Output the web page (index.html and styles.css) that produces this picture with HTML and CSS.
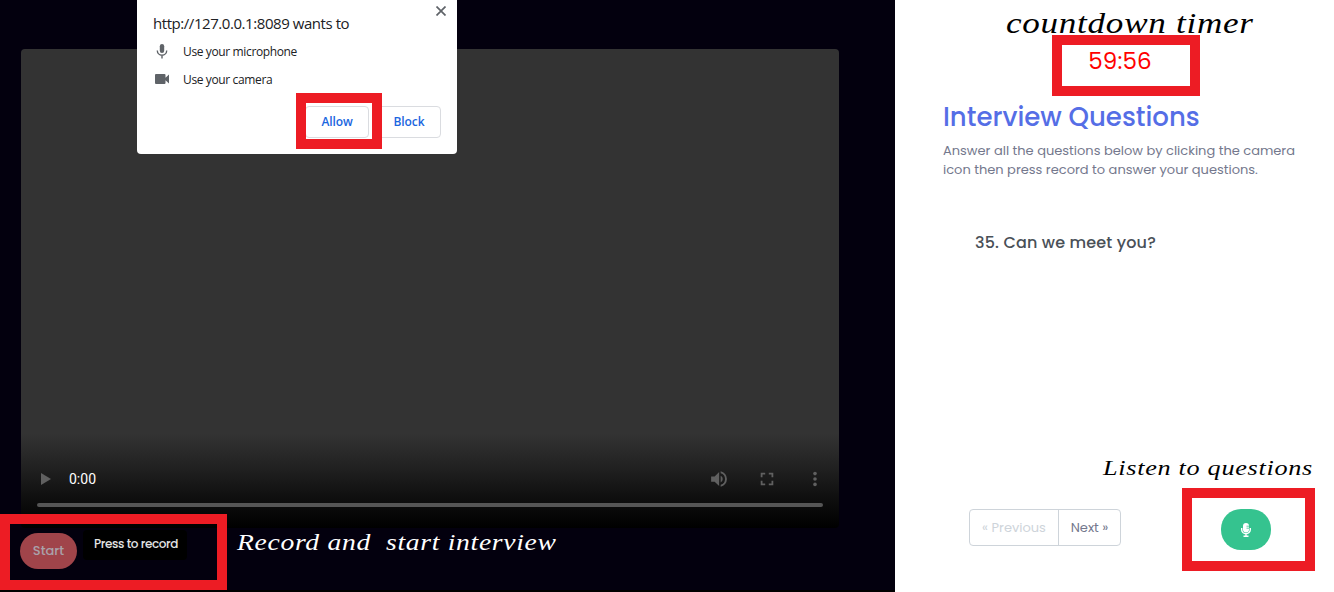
FILE: index.html
```html
<!DOCTYPE html>
<html lang="en">
<head>
<meta charset="utf-8">
<title>Interview</title>
<link rel="stylesheet" href="styles.css">
</head>
<body>
<main class="page">
  <section class="stage">
    <div class="video">
      <div class="controls">
        <svg class="play" viewBox="0 0 10 12"><path d="M0 0L10 6L0 12Z"/></svg>
        <span class="time">0:00</span>
        <svg class="ctl" viewBox="0 0 24 24"><path d="M1.500 8.500v7h4.700l6 5.700V2.800l-6 5.700zM17 12a5 5 0 0 0-2.800-4.500v9A5 5 0 0 0 17 12zM14.200 1.800v2.500a8 8 0 0 1 0 15.400v2.500a10.400 10.400 0 0 0 0-20.400z"/></svg>
        <svg class="ctl" viewBox="0 0 24 24"><path d="M7 14H5v5h5v-2H7zM5 10h2V7h3V5H5zm12 7h-3v2h5v-5h-2zM14 5v2h3v3h2V5z" transform="translate(-2.400 -2.400) scale(1.200)"/></svg>
        <svg class="ctl" viewBox="0 0 24 24"><circle cx="12" cy="4.800" r="2.400"/><circle cx="12" cy="12" r="2.400"/><circle cx="12" cy="19.200" r="2.400"/></svg>
      </div>
      <div class="track"></div>
    </div>
    <div class="record">
      <button class="start">Start</button>
      <span class="tip">Press to record</span>
    </div>
  </section>
  <aside class="panel">
    <div class="timer">59:56</div>
    <h1 class="title">Interview Questions</h1>
    <p class="intro">Answer all the questions below by clicking the camera<br>icon then press record to answer your questions.</p>
    <p class="question">35. Can we meet you?</p>
    <div class="footer">
      <nav class="pager"><span class="prev">« Previous</span><span class="next">Next »</span></nav>
      <button class="listen" aria-label="Listen">
        <svg class="mic" viewBox="0 0 10 14"><rect x="2" y="0" width="6" height="9.500" rx="3"/><path d="M.7 5v1.500a4.300 4.300 0 0 0 8.600 0V5M5 11v2M2.500 13.200h5" fill="none" stroke="#fff" stroke-width="1.400"/><path d="M5.500 3.200h2.500M5.500 5.200h2.500" stroke="#35c38f" stroke-width=".8"/></svg>
      </button>
    </div>
  </aside>
</main>

<div class="prompt">
  <svg class="close" viewBox="0 0 10 10"><path d="M.5.5l9 9M9.500.5l-9 9"/></svg>
  <div class="origin">http://127.0.0.1:8089 wants to</div>
  <div class="perm">
    <svg viewBox="0 0 12 15"><rect x="3.800" y="0" width="4.400" height="9" rx="2.200"/><path d="M1.300 6.500a4.700 4.700 0 0 0 9.400 0M6 11v3.500" fill="none" stroke="#5f6368" stroke-width="1.400"/></svg>
    <span>Use your microphone</span>
  </div>
  <div class="perm">
    <svg class="cam" viewBox="0 0 14 10"><path d="M1 0h8.500a1 1 0 0 1 1 1v2.800L14 .6v8.800l-3.500-3.200V9a1 1 0 0 1-1 1H1a1 1 0 0 1-1-1V1a1 1 0 0 1 1-1z"/></svg>
    <span>Use your camera</span>
  </div>
  <div class="actions"><button class="choice">Allow</button><button class="choice">Block</button></div>
</div>

<div class="mark mark-allow"></div>
<div class="mark mark-start"></div>
<div class="mark mark-timer"></div>
<div class="mark mark-listen"></div>
<div class="note note-timer">countdown timer</div>
<div class="note note-record">Record and&nbsp; start interview</div>
<div class="note note-listen">Listen to questions</div>
</body>
</html>
```
FILE: styles.css
```css
* { box-sizing: border-box; }
body { margin: 0; background: #fff; font-family: Poppins, Inter, sans-serif; overflow: hidden; }
button { font-family: inherit; border: 0; padding: 0; }
p, h1 { margin: 0; }
span { white-space: nowrap; }
.page { display: flex; height: 592px; }

.stage { width: 895px; padding: 49px 56px 0 21px; background: #03000e; border-bottom: 2px solid #000; }
.video { height: 479px; border-radius: 4px; background: linear-gradient(#333 0, #333 385px, #232323 415px, #111 445px, #000 479px); padding: 420px 16px 0; }
.controls { display: flex; align-items: center; height: 20px; padding: 0 0 0 4px; fill: #606060; }
.play { width: 10px; height: 12px; }
.time { margin: 0 auto 0 18px; font: 14px/20px Roboto, sans-serif; color: #fff; }
.ctl { width: 18px; height: 18px; margin-left: 30px; }
.ctl:last-child { margin-right: -1px; }
.track { height: 4px; margin-top: 14px; border-radius: 2px; background: #555; }
.record { display: flex; margin: 5px 0 0 -1px; gap: 6px; }
.start { width: 57px; height: 36px; border-radius: 18px; background: #a0444a; color: #aaa2aa; font-size: 13px; font-weight: 500; }
.tip { height: 30px; margin-top: -3px; padding: 0 9px 0 11px; border-radius: 4px; background: #000; color: #e4e4e4; font-size: 12px; font-weight: 500; line-height: 28px; letter-spacing: -.4px; }

.panel { width: 439px; padding: 43px 37px 0 48px; }
.timer { height: 36px; text-align: center; color: #f00; font-size: 23px; line-height: 36px; letter-spacing: .15px; }
.title { height: 40px; margin-top: 18px; color: #556ee6; font-size: 26px; line-height: 40px; font-weight: 500; }
.intro { margin-top: 4px; color: #74788d; font-size: 13px; line-height: 19px; white-space: nowrap; }
.question { margin: 52px 0 0 32px; color: #495057; font-size: 16px; font-weight: 500; line-height: 24px; letter-spacing: .16px; }
.footer { display: flex; justify-content: space-between; margin: 254px -11px 0 26px; padding-right: 37px; }
.pager { display: flex; width: 152px; height: 37px; border: 1px solid #ced4da; border-radius: 4px; font-size: 13px; line-height: 35px; text-align: center; color: #74788d; }
.prev { width: 89px; border-right: 1px solid #ced4da; color: #ced4da; }
.next { flex: 1; }
.listen { display: flex; align-items: center; justify-content: center; width: 50px; height: 41px; border-radius: 20px; background: #35c38f; }
.mic { width: 10px; height: 14px; fill: #fff; }

.prompt { position: absolute; left: 137px; top: 0; width: 320px; height: 154px; padding: 11px 16px 0; border-radius: 0 0 4px 4px; background: #fff; color: #202124; font-family: "Open Sans", sans-serif; }
.close { position: absolute; right: 11px; top: 6px; width: 10px; height: 10px; stroke: #5f6368; stroke-width: 1.7; }
.origin { font-size: 15px; line-height: 24px; height: 26px; letter-spacing: -.44px; }
.perm { display: flex; align-items: center; gap: 12px; height: 28px; font-size: 12px; letter-spacing: -.37px; fill: #5f6368; }
.perm svg { width: 18px; height: 15px; }
.perm .cam { height: 10px; }
.actions { display: flex; justify-content: flex-end; gap: 8px; margin-top: 13px; }
.choice { width: 64px; height: 32px; padding-bottom: 1px; border: 1px solid #dadce0; border-radius: 4px; background: #fff; color: #1a66e0; font-size: 12px; font-weight: 600; letter-spacing: -.1px; }

.mark { position: absolute; border: 10px solid #ed1c24; }
.mark-allow { left: 296px; top: 93px; width: 86px; height: 56px; }
.mark-start { left: 0; top: 514px; width: 227px; height: 76px; }
.mark-timer { left: 1052px; top: 35px; width: 148px; height: 61px; }
.mark-listen { left: 1182px; top: 488px; width: 133px; height: 83px; }
.note { position: absolute; font-family: "Lucida Calligraphy", "Liberation Serif", serif; font-style: italic; white-space: nowrap; transform-origin: left; }
.note-timer { left: 1006px; top: 5px; font-size: 29px; line-height: 36px; letter-spacing: .6px; transform: scaleX(1.21); color: #000; }
.note-record { left: 237px; top: 527px; font-size: 24px; line-height: 30px; letter-spacing: .6px; transform: scaleX(1.15); color: #fff; }
.note-listen { left: 1103px; top: 453px; font-size: 22px; line-height: 30px; letter-spacing: .6px; transform: scaleX(1.19); color: #000; }
```
